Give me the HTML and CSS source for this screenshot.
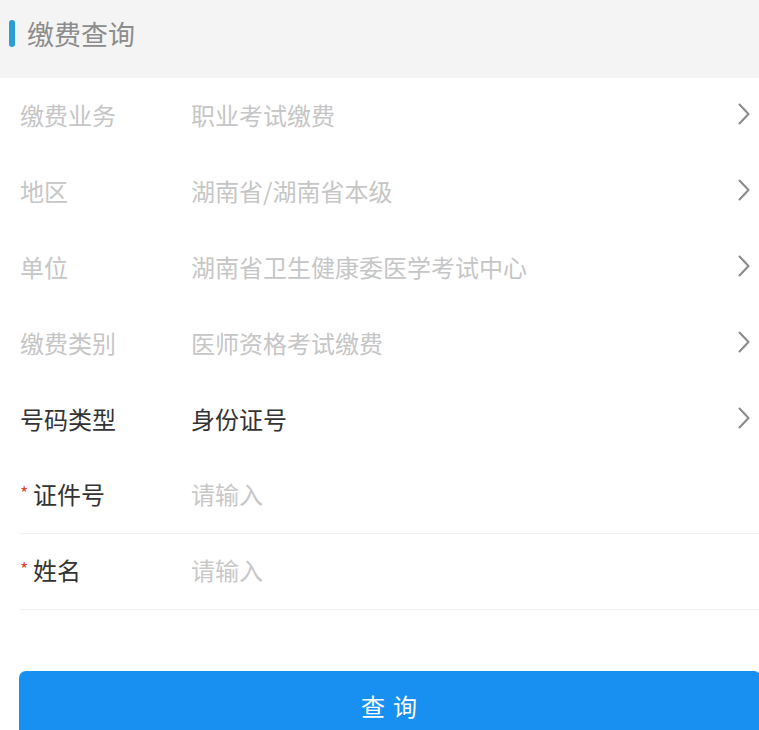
FILE: index.html
```html
<!DOCTYPE html>
<html lang="zh-CN">
<head>
<meta charset="utf-8">
<link rel="stylesheet" href="styles.css">
</head>
<body>
<div class="page">
  <header class="head">
    <span class="bar"></span>
    <h1 class="title">缴费查询</h1>
  </header>
  <div class="form">
    <div class="row">
      <span class="label dim">缴费业务</span>
      <span class="value dim">职业考试缴费</span>
      <svg class="chev" viewBox="0 0 12 22"><path d="M1.5 1.5 L10.5 11 L1.5 20.5" /></svg>
    </div>
    <div class="row">
      <span class="label dim">地区</span>
      <span class="value dim">湖南省/湖南省本级</span>
      <svg class="chev" viewBox="0 0 12 22"><path d="M1.5 1.5 L10.5 11 L1.5 20.5" /></svg>
    </div>
    <div class="row">
      <span class="label dim">单位</span>
      <span class="value dim">湖南省卫生健康委医学考试中心</span>
      <svg class="chev" viewBox="0 0 12 22"><path d="M1.5 1.5 L10.5 11 L1.5 20.5" /></svg>
    </div>
    <div class="row">
      <span class="label dim">缴费类别</span>
      <span class="value dim">医师资格考试缴费</span>
      <svg class="chev" viewBox="0 0 12 22"><path d="M1.5 1.5 L10.5 11 L1.5 20.5" /></svg>
    </div>
    <div class="row">
      <span class="label">号码类型</span>
      <span class="value">身份证号</span>
      <svg class="chev" viewBox="0 0 12 22"><path d="M1.5 1.5 L10.5 11 L1.5 20.5" /></svg>
    </div>
    <div class="row lined">
      <span class="label"><i class="req">*</i>证件号</span>
      <span class="value ph">请输入</span>
    </div>
    <div class="row lined">
      <span class="label"><i class="req">*</i>姓名</span>
      <span class="value ph">请输入</span>
    </div>
  </div>
  <button class="btn">查询</button>
</div>
</body>
</html>
```

FILE: styles.css
```css
html, body {
  margin: 0;
  padding: 0;
  background: #ffffff;
  font-family: "Noto Sans CJK SC", "Noto Sans", sans-serif;
  overflow: hidden;
}
.page {
  width: 759px;
}
.head {
  height: 78px;
  background: #f4f4f4;
  display: flex;
  align-items: flex-start;
  padding: 16px 0 0 9px;
  box-sizing: border-box;
}
.bar {
  width: 6px;
  height: 27px;
  border-radius: 3px;
  background: #2b9fd5;
  margin-top: 4px;
  margin-right: 12px;
}
.title {
  margin: 0;
  font-size: 27px;
  font-weight: normal;
  line-height: 36px;
  color: #8c8c8c;
}
.form {
  display: flex;
  flex-direction: column;
}
.row {
  height: 76px;
  margin-left: 20px;
  padding-bottom: 4px;
  display: flex;
  align-items: center;
  box-sizing: border-box;
  font-size: 24px;
}
.row.lined {
  border-bottom: 1px solid #f0f0f0;
}
.label {
  width: 171px;
  color: #333333;
  display: flex;
  align-items: center;
}
.value {
  flex: 1;
  color: #333333;
}
.dim {
  color: #c6c6c6;
}
.ph {
  color: #c8c8c8;
}
.req {
  font-style: normal;
  color: #e0443b;
  font-size: 18px;
  width: 13px;
  line-height: 18px;
  margin-top: -4px;
}
.chev {
  width: 12px;
  height: 22px;
  margin-right: 9px;
  fill: none;
  stroke: #8a8a8a;
  stroke-width: 2;
  stroke-linecap: round;
  stroke-linejoin: round;
}
.btn {
  display: block;
  margin: 61px 0 0 19px;
  width: 742px;
  height: 74px;
  padding: 0 0 6px 6px;
  border: none;
  border-radius: 7px;
  background: #1890f1;
  color: #ffffff;
  font-family: "Noto Sans CJK SC", "Noto Sans", sans-serif;
  font-size: 24px;
  letter-spacing: 8px;
}
```
